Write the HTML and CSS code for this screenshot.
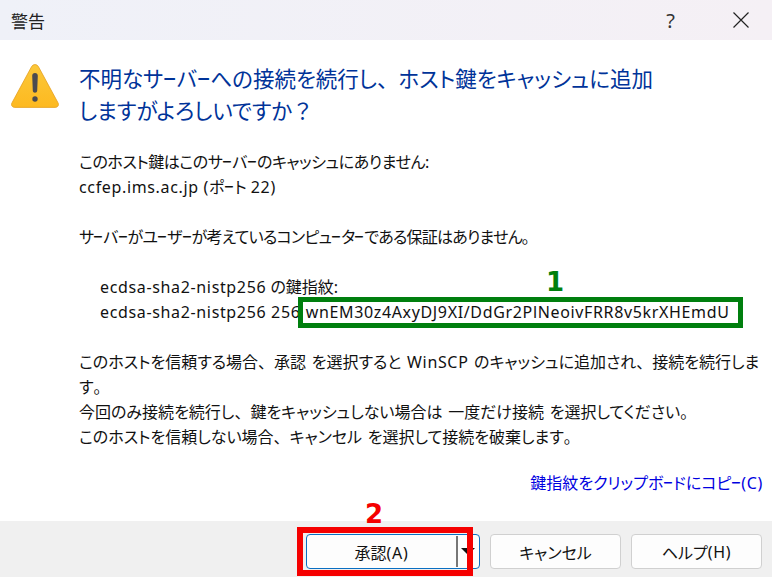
FILE: index.html
```html
<!DOCTYPE html>
<html lang="ja">
<head>
<meta charset="utf-8">
<title>警告</title>
<link rel="stylesheet" href="styles.css">
</head>
<body>
<div class="dialog">
  <header class="titlebar">
    <span class="title">警告</span>
    <span class="help">?</span>
    <svg class="close" width="16" height="16" viewBox="0 0 16 16"><path d="M.5.5l15 15M15.500.5l-15 15" stroke="#222" stroke-width="1.200" fill="none"/></svg>
  </header>
  <main class="body">
    <svg class="warn" width="50" height="44" viewBox="0 0 50 44">
      <defs><linearGradient id="wg" x1="0" y1="0" x2="0" y2="1"><stop offset="0" stop-color="#fbc83a"/><stop offset="1" stop-color="#fdb920"/></linearGradient></defs>
      <path d="M25 .6c1.500 0 2.700.8 3.500 2.200l19.500 36c1.300 2.300-.2 4.600-2.800 4.600H4.800c-2.600 0-4.100-2.300-2.800-4.600l19.500-36C22.300 1.400 23.500.6 25 .6z" fill="url(#wg)" stroke="#e5a020" stroke-width=".8"/>
      <path d="M25 9c1.700 0 2.900 1.200 2.800 2.800l-.6 15c-.1 1.200-1 2-2.200 2s-2.100-.8-2.200-2l-.6-15C22.100 10.200 23.300 9 25 9z" fill="#4b4b50"/>
      <circle cx="25" cy="35" r="2.700" fill="#4b4b50"/>
    </svg>
    <div class="content">
      <h1 class="heading">不明なサ<span class="cho">ー</span>バ<span class="cho">ー</span>への接続を続行し<span class="full">、</span>ホスト鍵をキャッシュに追加<br>しますがよろしいですか<span class="full">？</span></h1>
      <p class="para p-first"><span class="tight-a">このホスト鍵はこのサ<span class="cho">ー</span>バ<span class="cho">ー</span>のキャッシュにありません:</span><br><span class="lat">ccfep.ims.ac.jp (</span>ポ<span class="cho">ー</span>ト <span class="lat">22)</span></p>
      <p class="para tight-b">サ<span class="cho">ー</span>バ<span class="cho">ー</span>がユ<span class="cho">ー</span>ザ<span class="cho">ー</span>が考えているコンピュ<span class="cho">ー</span>タ<span class="cho">ー</span>である保証はありません<span class="full">。</span></p>
      <p class="para p-key"><span class="lat">ecdsa-sha2-nistp256</span> の鍵指紋:<br><span class="lat">ecdsa-sha2-nistp256 256</span> <span class="lat fp">wnEM30z4AxyDJ9XI/DdGr2PlNeoivFRR8v5krXHEmdU</span></p>
      <p class="para p-trust">このホストを信頼する場合<span class="full">、</span>承認 を選択すると <span class="lat">WinSCP</span> のキャッシュに追加され<span class="full">、</span>接続を続行しま<br>す<span class="full">。</span><br>今回のみ接続を続行し<span class="full">、</span>鍵をキャッシュしない場合は 一度だけ接続 を選択してください<span class="full">。</span><br>このホストを信頼しない場合<span class="full">、</span>キャンセル を選択して接続を破棄します<span class="full">。</span></p>
      <a class="copy">鍵指紋をクリップボ<span class="cho">ー</span>ドにコピ<span class="cho">ー</span><span class="lat">(C)</span></a>
    </div>
  </main>
  <footer class="footer">
    <button class="btn btn-primary"><span class="btn-label">承認<span class="lat">(A)</span></span><span class="sep"></span><span class="caret"></span></button>
    <button class="btn btn-cancel">キャンセル</button>
    <button class="btn btn-help">ヘルプ<span class="lat">(H)</span></button>
  </footer>
  <div class="note note-green"></div>
  <div class="num num-green">1</div>
  <div class="note note-red"></div>
  <div class="num num-red">2</div>
</div>
</body>
</html>
```
FILE: styles.css
```css
* { box-sizing: border-box; }
html, body { margin: 0; padding: 0; background: #fff; }
body { width: 772px; height: 577px; overflow: hidden; }
.dialog {
  position: relative;
  width: 772px;
  height: 577px;
  display: flex;
  flex-direction: column;
  font-family: "Noto Sans", "Noto Sans CJK JP", sans-serif;
  font-size: 16px;
  font-feature-settings: "palt";
  color: #111;
}
.lat { letter-spacing: .65px; line-height: 1; }
.cho { display: inline-block; width: .62em; transform: scaleX(.62); transform-origin: left center; line-height: 1; }
.full { font-feature-settings: normal; }
.tight-a { letter-spacing: -.44px; }
.tight-b { letter-spacing: -.77px; }
.titlebar {
  height: 40px;
  flex: none;
  display: flex;
  align-items: center;
  background: linear-gradient(90deg, #eff1f8, #f5f0f5);
  padding-left: 11px;
}
.title { font-size: 17px; color: #222; }
.help { margin-left: auto; margin-right: 58px; font-size: 20px; color: #333; }
.close { margin-right: 23px; width: 16px; height: 16px; }
.body { flex: 1; display: flex; background: #fff; min-height: 0; }
.warn { margin: 24px 0 0 10px; flex: none; }
.content { margin-left: 19px; flex: 1; min-width: 0; display: flex; flex-direction: column; }
.heading {
  margin: 23px 0 0;
  font-size: 21.500px;
  line-height: 32px;
  font-weight: 400;
  color: #003399;
  white-space: nowrap;
}
.para { margin: 25px 0 0; line-height: 25px; white-space: nowrap; }
.p-first { margin-top: 23px; }
.p-key { padding-left: 21px; }
.p-trust { word-spacing: 1.500px; }
.fp { margin-left: 1px; word-spacing: 0; }
.copy { margin-top: 21px; align-self: flex-end; color: #0000e0; line-height: 25px; margin-right: 9px; }
.footer {
  height: 56px;
  flex: none;
  background: #f0f0f0;
  display: flex;
  align-items: flex-start;
  padding: 13px 0 0 306px;
}
.btn {
  height: 35px;
  border: 1px solid #d0d0d0;
  border-radius: 4px;
  background: #fdfdfd;
  font: inherit;
  font-feature-settings: "palt";
  color: #111;
  padding: 0;
  display: flex;
  align-items: center;
  justify-content: center;
}
.btn-primary { width: 174px; border-color: #0a6fc2; justify-content: flex-start; }
.btn-label { width: 149px; text-align: center; }
.sep { width: 2px; height: 31px; background: #777; flex: none; }
.caret { width: 0; height: 0; border-left: 7px solid transparent; border-right: 7px solid transparent; border-top: 7px solid #111; margin-left: 3px; }
.btn-cancel { width: 131px; margin-left: 10px; }
.btn-help { width: 131px; margin-left: 10px; }
.note { position: absolute; }
.note-green { left: 298px; top: 297px; width: 445px; height: 31px; border: 5px solid #007f0e; }
.note-red { left: 297px; top: 527px; width: 176px; height: 49px; border: 6px solid #f50000; }
.num { position: absolute; font-family: "DejaVu Sans", sans-serif; font-weight: 700; font-size: 26px; line-height: 30px; }
.num-green { left: 546px; top: 267px; color: #007f0e; }
.num-red { left: 365px; top: 499px; color: #f50000; }
```
